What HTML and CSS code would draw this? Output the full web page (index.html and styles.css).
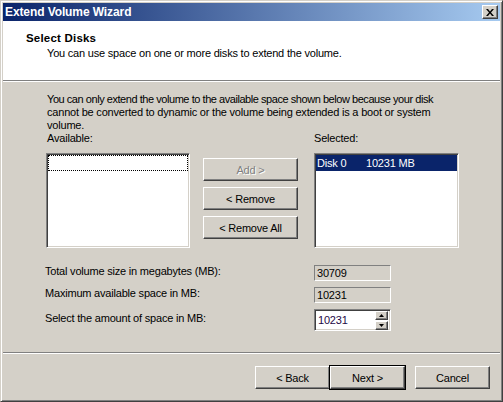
FILE: index.html
```html
<!DOCTYPE html>
<html lang="en">
<head>
  <meta charset="UTF-8">
  <title>Extend Volume Wizard</title>
  <link rel="stylesheet" href="styles.css">
</head>
<body>
  <div class="window">
    <div class="titlebar">
      <span class="title">Extend Volume Wizard</span>
      <button class="close-btn" aria-label="Close">
        <svg width="8" height="7" viewBox="0 0 8 7"><path d="M0 0h2l2 2.5L6 0h2L5 3.5 8 7H6L4 4.5 2 7H0l3-3.5z" fill="#000"/></svg>
      </button>
    </div>

    <div class="header">
      <div class="header-title">Select Disks</div>
      <div class="header-sub">You can use space on one or more disks to extend the volume.</div>
    </div>

    <div class="content">
      <p class="note"><span class="tight">You can only extend the volume to the available space shown below because your disk</span><br>cannot be converted to dynamic or the volume being extended is a boot or system<br>volume.</p>

      <div class="lists">
        <div class="list-col available">
          <div class="list-label">Available:</div>
          <div class="listbox">
            <div class="focus-row"></div>
          </div>
        </div>

        <div class="move-buttons">
          <button class="btn" disabled>Add &gt;</button>
          <button class="btn">&lt; Remove</button>
          <button class="btn">&lt; Remove All</button>
        </div>

        <div class="list-col selected">
          <div class="list-label">Selected:</div>
          <div class="listbox">
            <div class="list-item active"><span class="disk-name">Disk 0</span><span>10231 MB</span></div>
          </div>
        </div>
      </div>

      <div class="sizes">
        <div class="size-row">
          <span class="size-label">Total volume size in megabytes (MB):</span>
          <span class="readonly">30709</span>
        </div>
        <div class="size-row">
          <span class="size-label">Maximum available space in MB:</span>
          <span class="readonly">10231</span>
        </div>
        <div class="size-row">
          <span class="size-label">Select the amount of space in MB:</span>
          <div class="spin">
            <span class="spin-value">10231</span>
            <div class="spin-buttons">
              <span class="spin-btn"><svg width="5" height="3" viewBox="0 0 5 3"><path d="M2.5 0L5 3H0z" fill="#000"/></svg></span>
              <span class="spin-btn"><svg width="5" height="3" viewBox="0 0 5 3"><path d="M0 0h5L2.5 3z" fill="#000"/></svg></span>
            </div>
          </div>
        </div>
      </div>
    </div>

    <div class="footer">
      <button class="btn wide">&lt; Back</button>
      <button class="btn wide default">Next &gt;</button>
      <button class="btn wide cancel">Cancel</button>
    </div>
  </div>
</body>
</html>
```

FILE: styles.css
```css
html, body {
  margin: 0;
  padding: 0;
}

body {
  font-family: "Liberation Sans", Arial, sans-serif;
  font-size: 11px;
  line-height: 13px;
  letter-spacing: -0.2px;
  color: #000;
  background: #d4d0c8;
}

.window {
  width: 503px;
  height: 402px;
  box-sizing: border-box;
  display: flex;
  flex-direction: column;
  padding: 2px;
  background: #d4d0c8;
  border: 1px solid;
  border-color: #d4d0c8 #404040 #404040 #d4d0c8;
  box-shadow: inset 1px 1px #fff, inset -1px -1px #808080;
}

.titlebar {
  height: 18px;
  flex-shrink: 0;
  display: flex;
  align-items: center;
  justify-content: space-between;
  padding: 0 2px;
  background: linear-gradient(to right, #0a246a, #a6caf0);
}

.title {
  color: #fff;
  font-weight: bold;
  font-size: 12px;
  letter-spacing: -0.1px;
}

.close-btn {
  width: 16px;
  height: 14px;
  padding: 0;
  display: flex;
  align-items: center;
  justify-content: center;
  background: #d4d0c8;
  border: 1px solid;
  border-color: #fff #404040 #404040 #fff;
  box-shadow: inset -1px -1px #808080;
}

.header {
  height: 60px;
  flex-shrink: 0;
  box-sizing: border-box;
  padding: 11px 0 0 23px;
  background: #fff;
  border-bottom: 1px solid #808080;
}

.header-title {
  font-weight: bold;
  font-size: 11.5px;
  letter-spacing: 0.2px;
}

.header-sub {
  margin: 2px 0 0 21px;
}

.content {
  height: 271px;
  flex-shrink: 0;
  box-sizing: border-box;
  padding: 11px 0 0 43px;
  border-top: 1px solid #fff;
}

.note {
  margin: 0 0 0 1px;
}

.note .tight {
  letter-spacing: -0.45px;
}

.lists {
  display: flex;
  align-items: flex-start;
}

.list-label {
  margin-bottom: 8px;
}

.available .list-label {
  padding-left: 1px;
}

.listbox {
  height: 95px;
  box-sizing: border-box;
  background: #fff;
  border: 1px solid;
  border-color: #808080 #fff #fff #808080;
  box-shadow: inset 1px 1px #404040, inset -1px -1px #d4d0c8;
  padding: 1px;
}

.available .listbox {
  width: 144px;
}

.selected .listbox {
  width: 145px;
}

.focus-row {
  height: 16px;
  box-sizing: border-box;
  border: 1px dotted #000;
}

.list-item {
  height: 16px;
  display: flex;
  align-items: center;
  padding-left: 1px;
  white-space: nowrap;
}

.list-item.active {
  background: #0a246a;
  color: #fff;
}

.disk-name {
  width: 49px;
}

.move-buttons {
  display: flex;
  flex-direction: column;
  gap: 6px;
  padding-top: 26px;
  margin: 0 16px 0 13px;
}

.btn {
  width: 95px;
  height: 23px;
  padding: 0;
  font-family: inherit;
  font-size: 11px;
  letter-spacing: -0.2px;
  color: #000;
  background: #d4d0c8;
  border: 1px solid;
  border-color: #fff #404040 #404040 #fff;
  box-shadow: inset -1px -1px #808080;
}

.btn:disabled {
  color: #808080;
  text-shadow: 1px 1px #fff;
}

.sizes {
  margin: 17px 0 0 -1px;
  display: flex;
  flex-direction: column;
  gap: 6px;
}

.size-row {
  display: flex;
  align-items: center;
}

.size-label {
  width: 269px;
  margin-top: -3px;
}

.readonly {
  width: 77px;
  height: 16px;
  box-sizing: border-box;
  padding: 1px 0 0 2px;
  line-height: 13px;
  border: 1px solid;
  border-color: #808080 #fff #fff #808080;
}

.spin {
  width: 77px;
  height: 22px;
  box-sizing: border-box;
  display: flex;
  align-items: center;
  justify-content: space-between;
  padding: 0 2px 0 3px;
  background: #fff;
  border: 1px solid;
  border-color: #808080 #fff #fff #808080;
  box-shadow: inset 1px 1px #404040, inset -1px -1px #d4d0c8;
}

.spin-value {
  color: #1e0846;
}

.spin-buttons {
  display: flex;
  flex-direction: column;
  gap: 1px;
}

.spin-btn {
  width: 13px;
  height: 9px;
  box-sizing: border-box;
  display: flex;
  align-items: center;
  justify-content: center;
  background: #d4d0c8;
  border: 1px solid;
  border-color: #fff #404040 #404040 #fff;
  box-shadow: inset -1px -1px #808080;
}

.footer {
  flex: 1;
  display: flex;
  justify-content: flex-end;
  align-items: flex-start;
  padding: 13px 10px 0 0;
  border-top: 1px solid #808080;
  box-shadow: inset 0 1px #fff;
}

.btn.wide {
  width: 75px;
}

.btn.default {
  outline: 1px solid #000;
  outline-offset: 0;
}

.btn.cancel {
  margin-left: 10px;
}
```
